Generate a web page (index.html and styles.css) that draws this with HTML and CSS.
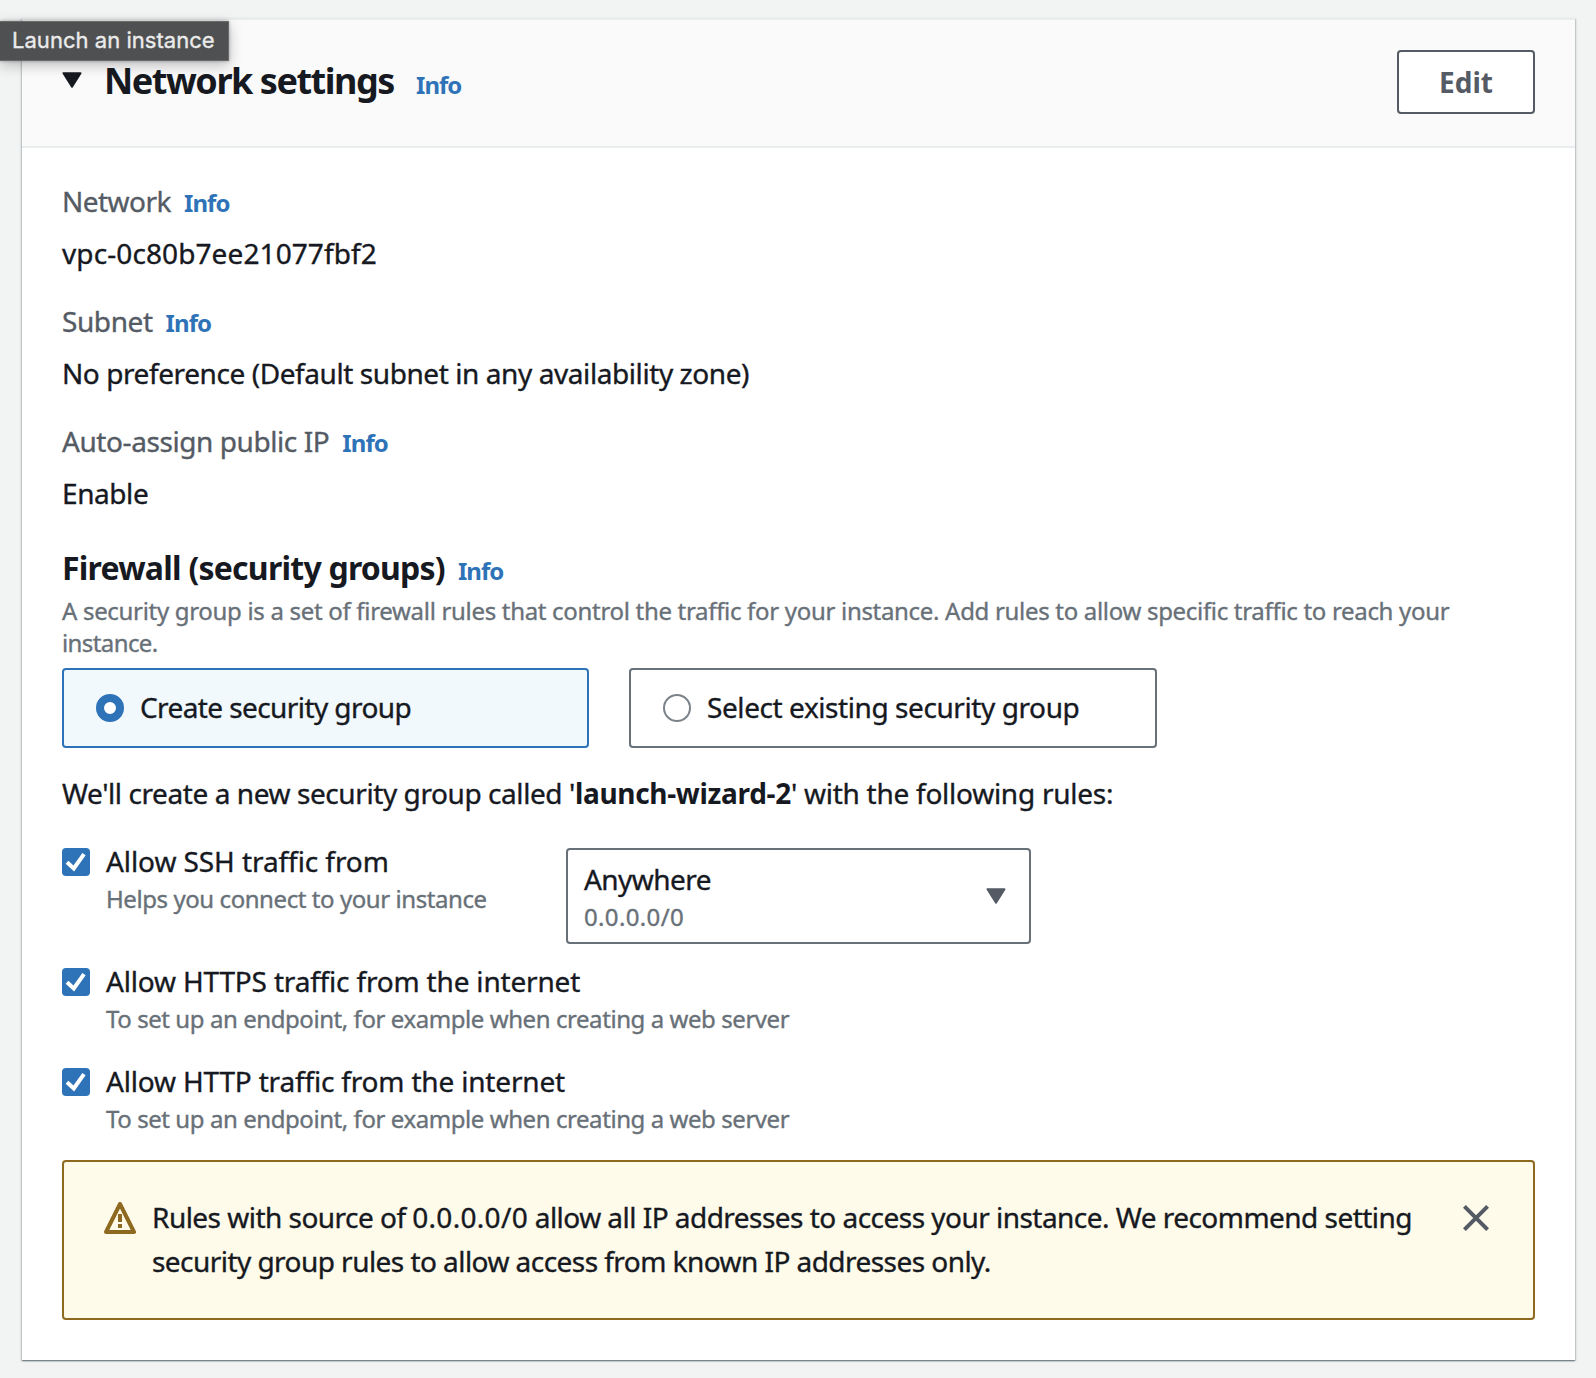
FILE: index.html
```html
<!DOCTYPE html>
<html lang="en">
<head>
<meta charset="utf-8">
<title>Launch an instance</title>
<link rel="stylesheet" href="styles.css">
</head>
<body>
<div class="tooltip">Launch an instance</div>
<main class="panel">
  <header class="panel-header">
    <svg class="caret" width="20" height="16" viewBox="0 0 20 16"><path d="M1.5 1.2h17L10 14.6z" fill="#16191f" stroke="#16191f" stroke-width="2" stroke-linejoin="round"/></svg>
    <h2 class="title">Network settings</h2>
    <a class="info title-info">Info</a>
    <button class="edit">Edit</button>
  </header>
  <div class="content">
    <div class="field">
      <div class="line"><span class="label label-network">Network</span><a class="info">Info</a></div>
      <div class="value value-vpc">vpc-0c80b7ee21077fbf2</div>
    </div>
    <div class="field">
      <div class="line"><span class="label">Subnet</span><a class="info">Info</a></div>
      <div class="value">No preference (Default subnet in any availability zone)</div>
    </div>
    <div class="field">
      <div class="line"><span class="label">Auto-assign public IP</span><a class="info">Info</a></div>
      <div class="value">Enable</div>
    </div>
    <div class="firewall-head"><h3 class="firewall">Firewall (security groups)</h3><a class="info">Info</a></div>
    <p class="description">A security group is a set of firewall rules that control the traffic for your instance. Add rules to allow specific traffic to reach your<br><span class="description-end">instance.</span></p>
    <div class="tiles">
      <div class="tile selected"><span class="radio checked"></span><span class="tile-text tile-create">Create security group</span></div>
      <div class="tile"><span class="radio"></span><span class="tile-text">Select existing security group</span></div>
    </div>
    <p class="summary">We'll create a new security group called '<b>launch-wizard-2</b><span class="summary-end">' with the following rules:</span></p>
    <div class="rule rule-ssh">
      <svg class="check" width="28" height="28" viewBox="0 0 28 28"><rect width="28" height="28" rx="4" fill="#2e73b8"/><path d="M5 14.3l6.8 6.2L22 6.2" fill="none" stroke="#fff" stroke-width="4"/></svg>
      <div class="rule-text">
        <div class="rule-name">Allow SSH traffic from</div>
        <div class="rule-help">Helps you connect to your instance</div>
      </div>
      <div class="select">
        <div class="select-text"><div class="select-name">Anywhere</div><div class="select-help">0.0.0.0/0</div></div>
        <svg width="20" height="16" viewBox="0 0 20 16"><path d="M1.5 1.2h17L10 14.6z" fill="#545b64" stroke="#545b64" stroke-width="2" stroke-linejoin="round"/></svg>
      </div>
    </div>
    <div class="rule">
      <svg class="check" width="28" height="28" viewBox="0 0 28 28"><rect width="28" height="28" rx="4" fill="#2e73b8"/><path d="M5 14.3l6.8 6.2L22 6.2" fill="none" stroke="#fff" stroke-width="4"/></svg>
      <div class="rule-text">
        <div class="rule-name">Allow HTTPS traffic from the internet</div>
        <div class="rule-help">To set up an endpoint, for example when creating a web server</div>
      </div>
    </div>
    <div class="rule">
      <svg class="check" width="28" height="28" viewBox="0 0 28 28"><rect width="28" height="28" rx="4" fill="#2e73b8"/><path d="M5 14.3l6.8 6.2L22 6.2" fill="none" stroke="#fff" stroke-width="4"/></svg>
      <div class="rule-text">
        <div class="rule-name">Allow HTTP traffic from the internet</div>
        <div class="rule-help">To set up an endpoint, for example when creating a web server</div>
      </div>
    </div>
    <div class="alert">
      <svg class="warning" width="32" height="32" viewBox="0 0 32 32" fill="none" stroke="#8d6a1f" stroke-width="4" stroke-linejoin="round"><path d="M16 2L30 30H2z"/><path d="M16 12v8M16 22v4"/></svg>
      <p class="alert-text"><span class="alert-first">Rules with source of <span class="cidr">0.0.0.0/0</span> allow all IP addresses to access your instance. We recommend setting</span><br><span class="alert-second">security group rules to allow access from known IP addresses only.</span></p>
      <svg class="close" width="26" height="26" viewBox="0 0 26 26"><path d="M1.4 1.4l23.2 23.2M24.6 1.4L1.4 24.6" stroke="#545b64" stroke-width="4"/></svg>
    </div>
  </div>
</main>
</body>
</html>
```
FILE: styles.css
```css
* { box-sizing: border-box; }
body {
  margin: 0;
  padding: 18px 21px 18px 22px;
  height: 1378px;
  overflow: hidden;
  background: #f2f4f4;
  color: #16191f;
  font: 28px/44px "Noto Sans", "Open Sans", sans-serif;
  letter-spacing: -0.42px;
  -webkit-text-stroke: 0.35px;
}
h2, h3, b, .info, .edit { -webkit-text-stroke: 0; }
h2, h3, p { margin: 0; }

.tooltip {
  position: absolute;
  left: 0;
  top: 21px;
  z-index: 2;
  width: 229px;
  height: 40px;
  padding-left: 12px;
  border: 1px solid #696a6b;
  border-left: 0;
  background: #4f5052;
  color: #ebebeb;
  font: 22px/37px Inter, sans-serif;
  letter-spacing: 0.03px;
  box-shadow: 0 4px 14px rgba(0, 0, 0, .25), 0 0 3px rgba(0, 0, 0, .3);
}

.panel {
  height: 1342px;
  background: #fff;
  border-top: 2px solid #eaeded;
  box-shadow: 0 1px 1px rgba(0, 28, 36, .35), 1px 1px 2px rgba(0, 28, 36, .2), -1px 1px 2px rgba(0, 28, 36, .2);
}
.panel-header {
  display: flex;
  align-items: flex-start;
  height: 128px;
  padding: 30px 40px 0;
  background: #fafafa;
  border-bottom: 2px solid #eaeded;
}
.caret { margin-top: 22px; }
.title {
  width: 290px;
  margin: 6px 0 0 22px;
  font-size: 36px;
  line-height: 50px;
  letter-spacing: -1.46px;
  white-space: nowrap;
}
.info {
  color: #2e73b8;
  font-size: 24px;
  font-weight: 700;
  line-height: 32px;
  letter-spacing: -0.95px;
}
.title-info { margin: 19px 0 0 22px; }
.edit {
  width: 138px;
  height: 64px;
  margin-left: auto;
  padding: 0;
  border: 2px solid #545b64;
  border-radius: 4px;
  background: #fff;
  color: #545b64;
  font: 700 28px/40px "Noto Sans", sans-serif;
  letter-spacing: 0;
}

.content { padding: 31px 40px 0; }
.field { margin-bottom: 24px; }
.line, .firewall-head { display: flex; align-items: baseline; gap: 13px; }
.line { height: 44px; }
.label { color: #545b64; }
.label-network { letter-spacing: -0.52px; }
.value { margin-top: 8px; }
.value-vpc { letter-spacing: 0.1px; }

.firewall-head { height: 40px; margin-top: 33px; }
.firewall { font-size: 32px; line-height: 40px; letter-spacing: -0.76px; }
.description {
  margin-top: 7px;
  color: #687078;
  font-size: 24px;
  line-height: 32px;
  letter-spacing: -0.31px;
  white-space: nowrap;
}
.description-end { letter-spacing: -0.6px; }
.tiles {
  display: grid;
  grid-template-columns: 527px 528px;
  gap: 40px;
  margin-top: 9px;
}
.tile {
  display: flex;
  align-items: center;
  gap: 16px;
  height: 80px;
  padding-left: 32px;
  border: 2px solid #687078;
  border-radius: 4px;
}
.tile.selected { border-color: #2e73b8; background: #f1f9fd; }
.tile-text { padding-bottom: 2px; }
.tile-create { letter-spacing: -0.59px; }
.radio {
  width: 28px;
  height: 28px;
  border: 2px solid #7b8289;
  border-radius: 50%;
  background: #fff;
}
.radio.checked { border: 8px solid #2e73b8; }
.summary { margin-top: 23px; white-space: nowrap; }
.summary b { letter-spacing: -0.31px; }
.summary-end { letter-spacing: -0.26px; }

.rule { display: flex; align-items: flex-start; height: 76px; margin-bottom: 24px; }
.rule-ssh { height: 120px; margin: 24px 0 0; }
.check { margin-top: 9px; }
.rule-text { margin-left: 16px; white-space: nowrap; }
.rule-name { letter-spacing: -0.18px; }
.rule-ssh .rule-name { letter-spacing: -0.08px; }
.rule-help { color: #687078; font-size: 24px; line-height: 32px; letter-spacing: -0.43px; }
.rule-ssh .rule-text { width: 460px; }
.select {
  display: flex;
  align-items: center;
  justify-content: space-between;
  width: 465px;
  height: 96px;
  margin-top: 9px;
  padding: 0 23px 0 16px;
  border: 2px solid #687078;
  border-radius: 4px;
}
.select-text { padding-bottom: 3px; }
.select-name { letter-spacing: -0.55px; }
.select-help { margin-top: -1px; padding-top: 1px; color: #687078; font-size: 24px; line-height: 32px; letter-spacing: 0.35px; }

.alert {
  display: flex;
  align-items: flex-start;
  height: 160px;
  margin-top: 25px;
  padding: 33px 44px 0 40px;
  border: 2px solid #8d6a1f;
  border-radius: 4px;
  background: #fffbea;
}
.warning { margin-top: 7px; }
.alert-text { margin-left: 16px; white-space: nowrap; }
.alert-first { letter-spacing: -0.53px; }
.cidr { letter-spacing: 0.3px; }
.alert-second { letter-spacing: -0.55px; }
.close { margin: 10px 0 0 auto; }
```
